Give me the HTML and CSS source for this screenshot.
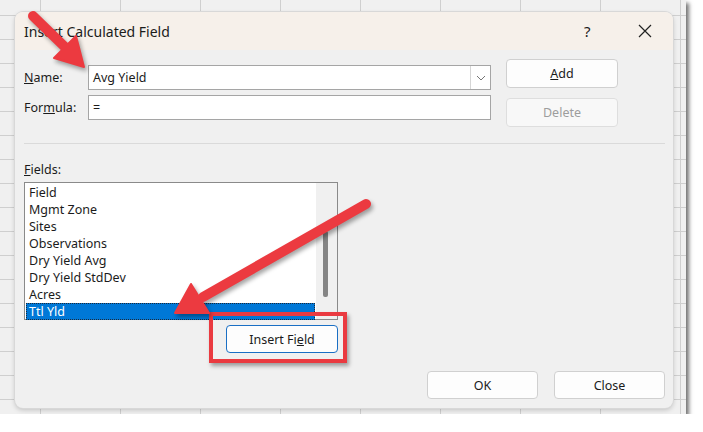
FILE: index.html
```html
<!DOCTYPE html>
<html lang="en">
<head>
    <meta charset="UTF-8">
    <title>Insert Calculated Field</title>
    <link rel="stylesheet" href="styles.css">
</head>
<body>
    <div class="sheet">
        <!-- dialog window sitting over the spreadsheet -->
        <div class="dialog">
            <div class="titlebar">
                <span class="title">Insert Calculated Field</span>
                <span class="help">?</span>
                <svg class="close" width="14" height="14" viewBox="0 0 14 14">
                    <path d="M1 1 L13 13 M13 1 L1 13" stroke="#222" stroke-width="1.2" fill="none"/>
                </svg>
            </div>

            <div class="body">
                <div class="top-row">
                    <div class="fields">
                        <div class="field-row">
                            <label class="label"><u>N</u>ame:</label>
                            <div class="input combo">
                                <span class="value">Avg Yield</span>
                                <span class="drop">
                                    <svg width="10" height="6" viewBox="0 0 10 6">
                                        <path d="M1 1 L5 5 L9 1" stroke="#777" stroke-width="1" fill="none"/>
                                    </svg>
                                </span>
                            </div>
                        </div>
                        <div class="field-row">
                            <label class="label">For<u>m</u>ula:</label>
                            <div class="input"><span class="value">=</span></div>
                        </div>
                    </div>
                    <div class="side-buttons">
                        <button class="btn"><u>A</u>dd</button>
                        <button class="btn disabled">Delete</button>
                    </div>
                </div>

                <div class="separator"></div>

                <div class="fields-label"><u>F</u>ields:</div>
                <div class="listbox">
                    <ul class="items">
                        <li>Field</li>
                        <li>Mgmt Zone</li>
                        <li>Sites</li>
                        <li>Observations</li>
                        <li>Dry Yield Avg</li>
                        <li>Dry Yield StdDev</li>
                        <li>Acres</li>
                        <li class="selected">Ttl Yld</li>
                    </ul>
                    <div class="scrollbar"><div class="thumb"></div></div>
                </div>
                <div class="insert-row">
                    <button class="btn focused">Insert Fi<u>e</u>ld</button>
                </div>

                <div class="footer">
                    <button class="btn wide">OK</button>
                    <button class="btn wide">Close</button>
                </div>
            </div>
        </div>

        <!-- annotations drawn on top of the screenshot -->
        <div class="highlight"></div>
        <svg class="arrows" width="703" height="432" viewBox="0 0 703 432">
            <g fill="#ec3a40" stroke="#ec3a40">
                <line x1="33" y1="16" x2="68" y2="50" stroke-width="10" stroke-linecap="round"/>
                <polygon points="84,67 76,36 54,58" stroke-width="2" stroke-linejoin="round"/>
                <line x1="366" y1="204" x2="203" y2="297" stroke-width="10" stroke-linecap="round"/>
                <polygon points="175,313 191,284 209,313" stroke-width="2" stroke-linejoin="round"/>
            </g>
        </svg>
    </div>
</body>
</html>
```

FILE: styles.css
```css
body {
    margin: 0;
    background: #fff;
    font-family: "Noto Sans", "Open Sans", sans-serif;
    font-size: 12.5px;
    color: #1b1b1b;
}
.sheet {
    position: relative;
    width: 686px;
    height: 414px;
    background-color: #f0f0f0;
    background-image:
        linear-gradient(to right, #cfcfcf 1px, transparent 1px),
        linear-gradient(to bottom, #cfcfcf 1px, transparent 1px);
    background-size: 80px 24px;
    background-position: 40px 15px;
    box-shadow: 3px 3px 4px rgba(0, 0, 0, 0.55);
}
.dialog {
    position: absolute;
    left: 15px;
    top: 12px;
    width: 658px;
    height: 396px;
    background: #f0f0f0;
    border-radius: 8px;
    box-shadow: 0 0 0 1px #d8d8d8, 0 2px 5px rgba(0, 0, 0, 0.2);
    overflow: hidden;
}
.titlebar {
    height: 38px;
    background: #f6f0ea;
    display: flex;
    align-items: center;
    padding-left: 9px;
}
.title {
    font-size: 14px;
    flex: 1;
}
.help {
    font-size: 15px;
    width: 54px;
}
.close {
    margin-right: 21px;
}
.body {
    padding: 0 8px 0 9px;
}
.top-row {
    display: flex;
    align-items: flex-start;
}
.fields {
    margin-top: 15px;
    display: flex;
    flex-direction: column;
    gap: 5px;
}
.field-row {
    display: flex;
    align-items: center;
}
.label {
    width: 64px;
}
.input {
    width: 401px;
    height: 23px;
    background: #fff;
    border: 1px solid #a5a5a5;
    display: flex;
    align-items: center;
}
.value {
    flex: 1;
    padding-left: 4px;
}
.drop {
    width: 19px;
    height: 23px;
    border-left: 1px solid #d6d6d6;
    display: flex;
    align-items: center;
    justify-content: center;
}
.side-buttons {
    margin-top: 9px;
    margin-left: 15px;
    display: flex;
    flex-direction: column;
    gap: 10px;
}
.btn {
    font-family: inherit;
    font-size: 12.5px;
    color: #1b1b1b;
    width: 112px;
    height: 29px;
    background: #fdfdfd;
    border: 1px solid #d0d0d0;
    border-radius: 4px;
    padding: 0;
}
.btn.disabled {
    color: #9d9d9d;
    background: #f8f8f8;
    border-color: #dedede;
}
.btn.focused {
    height: 28px;
    border-color: #1a6fc4;
}
.separator {
    margin-top: 16px;
    height: 1px;
    background: #dadada;
}
.fields-label {
    margin-top: 17px;
    height: 17px;
    line-height: 17px;
}
.listbox {
    margin-top: 4px;
    width: 312px;
    height: 136px;
    border: 1px solid #8a8a8a;
    background: #fff;
    display: flex;
}
.items {
    list-style: none;
    margin: 0;
    padding: 1px 1px 0;
    flex: 1;
}
.items li {
    height: 17px;
    line-height: 17px;
    padding-left: 3px;
}
.items li.selected {
    background: #0078d7;
    color: #fff;
    outline: 1px dotted #1e2a3a;
    outline-offset: -1px;
}
.scrollbar {
    width: 21px;
    background: #f0f0f0;
    position: relative;
}
.thumb {
    position: absolute;
    left: 7px;
    top: 48px;
    width: 5px;
    height: 66px;
    background: #858585;
    border-radius: 2px;
}
.insert-row {
    width: 314px;
    display: flex;
    justify-content: flex-end;
    margin-top: 5px;
}
.footer {
    margin-top: 18px;
    display: flex;
    justify-content: flex-end;
    gap: 16px;
}
.btn.wide {
    width: 111px;
    height: 28px;
}
.highlight {
    position: absolute;
    left: 209px;
    top: 312px;
    width: 130px;
    height: 43px;
    border: 4px solid #ea3a40;
    box-shadow: 2px 3px 4px rgba(0, 0, 0, 0.35);
}
.arrows {
    position: absolute;
    left: 0;
    top: 0;
    filter: drop-shadow(2px 3px 2px rgba(0, 0, 0, 0.35));
}
```
